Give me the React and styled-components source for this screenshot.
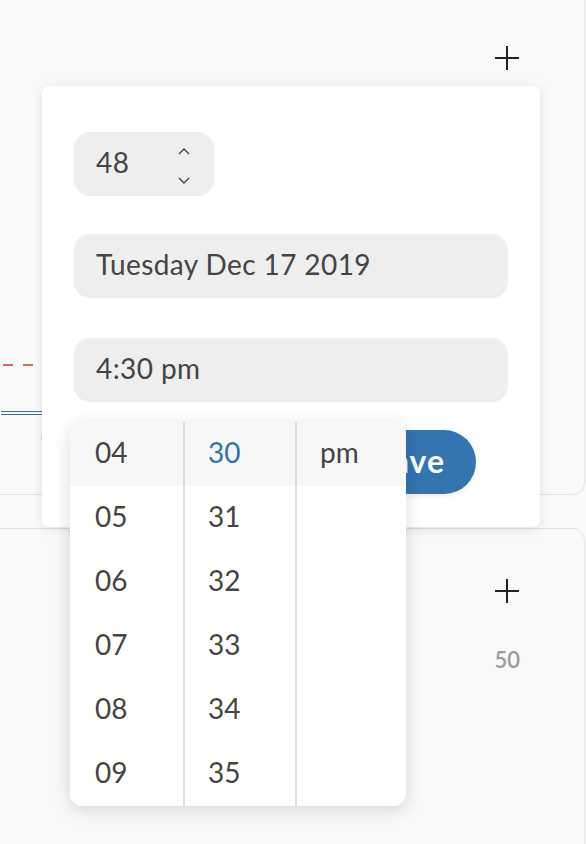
import React from "react";
import styled, { createGlobalStyle } from "styled-components";

const Global = createGlobalStyle`
  html, body { margin: 0; padding: 0; }
  body {
    background: #fafafa;
    font-family: "Lato", "Noto Sans", sans-serif;
    color: #444;
  }
`;

const Page = styled.div`
  position: relative;
  width: 586px;
  height: 844px;
  overflow: hidden;
  background: #fafafa;
`;

const Card = styled.div`
  box-sizing: border-box;
  margin-left: -20px;
  margin-right: 1px;
  margin-top: ${(p) => p.$mt}px;
  height: ${(p) => p.$h}px;
  padding-left: 20px;
  background: #f9f9f9;
  border: 1px solid #e2e2e2;
  border-radius: 12px;
  display: flex;
  flex-direction: column;
`;

const CardHeader = styled.div`
  display: flex;
  justify-content: flex-end;
  padding: ${(p) => p.$pt}px 65px 0 0;
`;

const PlusIcon = () => (
  <svg width="24" height="24" viewBox="0 0 24 24">
    <path d="M12 0V24M0 12H24" stroke="#222" strokeWidth="2" fill="none" />
  </svg>
);

const Chart = styled.svg`
  display: block;
  margin-top: ${(p) => p.$mt}px;
`;

const StatRow = styled.div`
  display: flex;
  justify-content: flex-end;
  padding: 46px 64px 0 0;
`;

const Stat = styled.span`
  font-size: 22px;
  font-weight: 600;
  color: #9b9b9b;
  line-height: 1;
`;

const Popup = styled.div`
  position: absolute;
  left: 42px;
  top: 86px;
  width: 498px;
  height: 441px;
  box-sizing: border-box;
  padding: 46px 32px 0 32px;
  background: #fff;
  border-radius: 7px;
  box-shadow: 0 2px 12px rgba(0, 0, 0, 0.1);
  display: flex;
  flex-direction: column;
`;

const Field = styled.div`
  box-sizing: border-box;
  height: 64px;
  width: ${(p) => (p.$w ? `${p.$w}px` : "100%")};
  margin-top: ${(p) => p.$mt || 0}px;
  background: #eeeeee;
  border-radius: 16px;
  padding: 0 22px 4px 22px;
  display: flex;
  align-items: center;
  justify-content: space-between;
  font-size: 28px;
  letter-spacing: 0.4px;
  color: #444;
`;

const Arrows = styled.div`
  display: flex;
  flex-direction: column;
  align-items: center;
  gap: 22px;
  margin-top: 7px;
  margin-right: 2px;
`;

const Chevron = ({ down }) => (
  <svg width="12" height="7" viewBox="0 0 12 7">
    <path
      d={down ? "M1 1L6 6L11 1" : "M1 6L6 1L11 6"}
      stroke="#444"
      strokeWidth="1.4"
      fill="none"
    />
  </svg>
);

const Actions = styled.div`
  display: flex;
  justify-content: flex-end;
  margin-top: 28px;
  padding-right: 32px;
`;

const SaveButton = styled.button`
  width: 118px;
  height: 64px;
  border: none;
  border-radius: 32px;
  padding: 0 31px 3px 0;
  text-align: right;
  background: #3474b0;
  color: #fff;
  font-family: "Lato", sans-serif;
  font-size: 32px;
  font-weight: 700;
  letter-spacing: 1px;
  box-shadow: 0 2px 4px rgba(0, 0, 0, 0.08);
`;

const Dropdown = styled.div`
  position: absolute;
  left: 28px;
  top: 336px;
  width: 336px;
  height: 384px;
  background: #fff;
  border-radius: 12px;
  box-shadow: 0 4px 18px rgba(0, 0, 0, 0.14);
  display: grid;
  grid-template-columns: 113px 112px 111px;
  overflow: hidden;
`;

const Column = styled.div`
  display: flex;
  flex-direction: column;
  border-left: ${(p) => (p.$first ? "none" : "2px solid #dddddd")};
`;

const Option = styled.div`
  box-sizing: border-box;
  height: 64px;
  flex-shrink: 0;
  display: flex;
  align-items: center;
  padding-left: ${(p) => (p.$first ? 25 : 23)}px;
  padding-bottom: 5px;
  font-size: 28px;
  color: ${(p) => (p.$selected ? "#3373b0" : "#444")};
  background: ${(p) => (p.$active ? "#f7f7f7" : "transparent")};
`;

const hours = ["04", "05", "06", "07", "08", "09"];
const minutes = ["30", "31", "32", "33", "34", "35"];

export default function App() {
  return (
    <Page>
      <Global />
      <Card $mt={-20} $h={515}>
        <CardHeader $pt={65}>
          <PlusIcon />
        </CardHeader>
        <Chart $mt={250} width="70" height="120" viewBox="0 0 70 120">
          <path d="M2 45H12M22 45H32" stroke="#e06666" strokeWidth="2" />
          <path d="M0 91.5H45M0 94.5H45" stroke="#3a70b2" strokeWidth="1.2" />
          <rect x="40.5" y="115" width="2" height="5" fill="#c8c8c8" />
        </Chart>
      </Card>
      <Card $mt={33} $h={400}>
        <CardHeader $pt={50}>
          <PlusIcon />
        </CardHeader>
        <StatRow>
          <Stat>50</Stat>
        </StatRow>
      </Card>
      <Popup>
        <Field $w={140}>
          <span>48</span>
          <Arrows>
            <Chevron />
            <Chevron down />
          </Arrows>
        </Field>
        <Field $mt={38}>Tuesday Dec 17 2019</Field>
        <Field $mt={40}>4:30 pm</Field>
        <Actions>
          <SaveButton>Save</SaveButton>
        </Actions>
        <Dropdown>
          <Column $first>
            {hours.map((h, i) => (
              <Option key={h} $first $active={i === 0}>
                {h}
              </Option>
            ))}
          </Column>
          <Column>
            {minutes.map((m, i) => (
              <Option key={m} $active={i === 0} $selected={i === 0}>
                {m}
              </Option>
            ))}
          </Column>
          <Column>
            <Option $active>pm</Option>
          </Column>
        </Dropdown>
      </Popup>
    </Page>
  );
}
